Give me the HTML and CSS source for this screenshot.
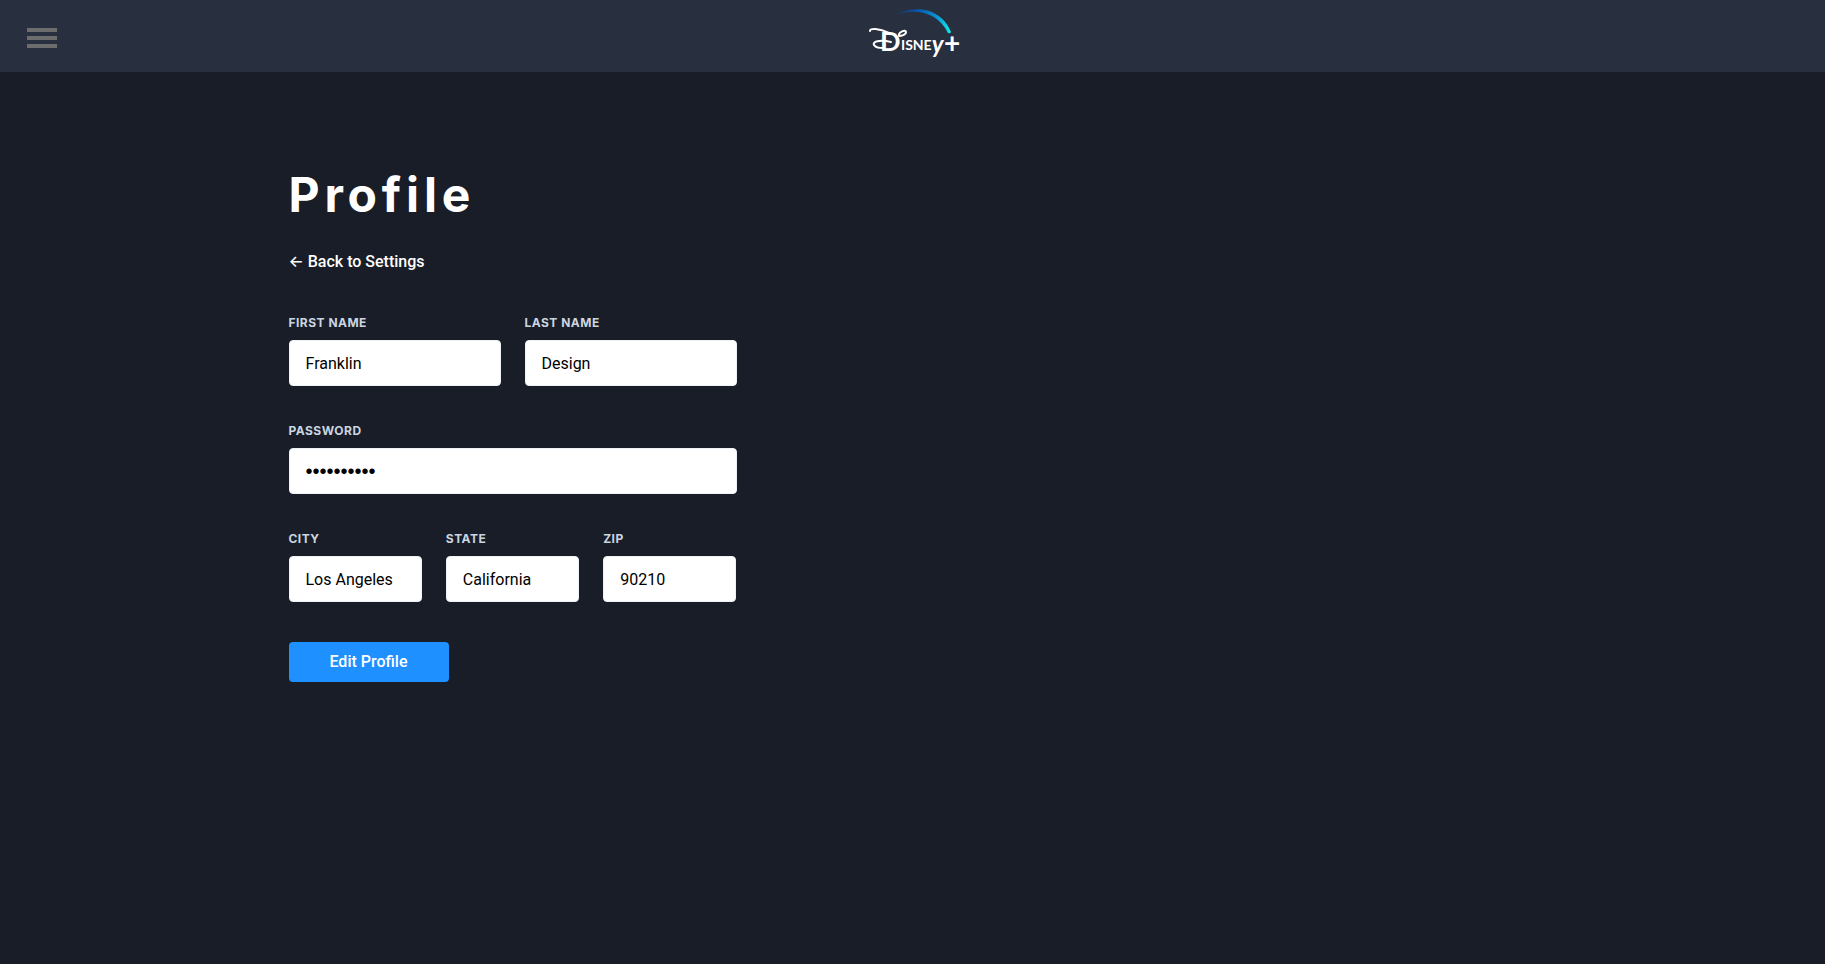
FILE: index.html
```html
<!DOCTYPE html>
<html lang="en">
<head>
  <meta charset="utf-8">
  <meta name="viewport" content="width=device-width, initial-scale=1">
  <title>Profile</title>
  <link rel="stylesheet" href="styles.css">
</head>
<body>
  <header class="site-header">
    <button class="menu-button" type="button" aria-label="Open menu">
      <span class="menu-bar"></span>
      <span class="menu-bar"></span>
      <span class="menu-bar"></span>
    </button>
    <a class="logo" href="#" aria-label="Disney+">
      <svg class="logo-art" viewBox="0 0 96 56" width="96" height="56">
        <defs>
          <linearGradient id="arc" gradientUnits="userSpaceOnUse" x1="26" y1="0" x2="86" y2="0">
            <stop offset="0" stop-color="#282f3f"/>
            <stop offset="0.4" stop-color="#0b4fa8"/>
            <stop offset="0.75" stop-color="#0a8fd0"/>
            <stop offset="1" stop-color="#0ef0ee"/>
          </linearGradient>
        </defs>
        <path class="logo-arc" d="M27 8C48-4 76-1 86 24Q85 26 83 25C73 4 50-1 27 8Z" fill="url(#arc)"/>
        <path class="logo-swoosh" d="M5 23C4 20 14 20 24 25"/>
        <path class="logo-swoosh" d="M26 34C14 31 7 34 9 37S14 40 18 40"/>
        <path class="logo-swoosh" d="M34 28C33 24 41 21 41 24S36 28 34 28"/>
        <text class="logo-initial" x="15" y="43">D</text>
        <text class="logo-name" x="36" y="42">ISNE<tspan class="logo-tail" dy="3">y</tspan></text>
        <text class="logo-plus" x="79" y="45">+</text>
      </svg>
    </a>
  </header>

  <main class="page">
    <h1 class="page-title">Profile</h1>
    <a class="back-link" href="#">← Back to Settings</a>

    <form class="profile-form">
      <div class="form-row">
        <div class="field">
          <label class="field-label" for="first-name">First Name</label>
          <input class="field-input" id="first-name" type="text" value="Franklin">
        </div>
        <div class="field">
          <label class="field-label" for="last-name">Last Name</label>
          <input class="field-input" id="last-name" type="text" value="Design">
        </div>
      </div>
      <div class="form-row">
        <div class="field">
          <label class="field-label" for="password">Password</label>
          <input class="field-input field-input-password" id="password" type="password" value="franklin10">
        </div>
      </div>
      <div class="form-row">
        <div class="field">
          <label class="field-label" for="city">City</label>
          <input class="field-input" id="city" type="text" value="Los Angeles">
        </div>
        <div class="field">
          <label class="field-label" for="state">State</label>
          <input class="field-input" id="state" type="text" value="California">
        </div>
        <div class="field">
          <label class="field-label" for="zip">Zip</label>
          <input class="field-input" id="zip" type="text" value="90210">
        </div>
      </div>
      <button class="submit-button" type="button">Edit Profile</button>
    </form>
  </main>
</body>
</html>
```
FILE: styles.css
```css
*,
*::before,
*::after {
  box-sizing: border-box;
}

body {
  margin: 0;
  min-height: 100vh;
  background: #191d27;
  color: #fff;
  font: 16px/24px Roboto, Inter, "Liberation Sans", sans-serif;
}

.site-header {
  display: grid;
  grid-template-columns: 1fr auto 1fr;
  align-items: center;
  height: 72px;
  padding: 0 27px;
  background: #282f3f;
}

.menu-button {
  display: flex;
  flex-direction: column;
  justify-self: start;
  gap: 4px;
  padding: 4px 0 0;
  border: 0;
  background: none;
  cursor: pointer;
}

.menu-bar {
  width: 30px;
  height: 4px;
  background: #6d6d6d;
}

.logo {
  display: block;
}

.logo-art {
  display: block;
}

.logo-swoosh {
  fill: none;
  stroke: #fff;
  stroke-width: 2;
  stroke-linecap: round;
}

.logo-initial,
.logo-name,
.logo-plus {
  fill: #fff;
  font-family: Lato, "Liberation Sans", sans-serif;
  font-weight: 700;
}

.logo-initial {
  font-size: 27px;
}

.logo-name {
  font-size: 14px;
}

.logo-tail {
  font-size: 24px;
  font-style: italic;
}

.logo-plus {
  font-size: 28px;
}

.page {
  max-width: 1280px;
  margin: 0 auto;
  padding: 94px 16px 0;
}

.page-title {
  margin: 0 0 26px;
  font-family: Inter, "Liberation Sans", sans-serif;
  font-size: 48px;
  font-weight: 700;
  line-height: 58px;
  letter-spacing: 0.1em;
}

.back-link {
  display: block;
  width: fit-content;
  margin-bottom: 40px;
  color: #fff;
  font-weight: 500;
  text-decoration: none;
}

.profile-form {
  max-width: 448px;
}

.form-row {
  display: flex;
  gap: 24px;
  margin-bottom: 36px;
}

.field {
  flex: 1;
  min-width: 0;
}

.field-label {
  display: block;
  margin-bottom: 8px;
  color: #cbd5e0;
  font-family: Inter, "Liberation Sans", sans-serif;
  font-size: 12px;
  font-weight: 700;
  line-height: 18px;
  letter-spacing: 0.04em;
  text-transform: uppercase;
}

.field-input {
  display: block;
  width: 100%;
  height: 46px;
  padding: 0 16px;
  border: 1px solid #edf2f7;
  border-radius: 4px;
  background: #fff;
  color: #000;
  font: inherit;
}

.field-input-password {
  font-family: "Liberation Sans", sans-serif;
  font-size: 20px;
}

.submit-button {
  width: 160px;
  height: 40px;
  margin-top: 4px;
  padding: 0;
  border: 0;
  border-radius: 4px;
  background: #1e90ff;
  color: #fff;
  font: inherit;
  font-weight: 500;
  cursor: pointer;
}
```
